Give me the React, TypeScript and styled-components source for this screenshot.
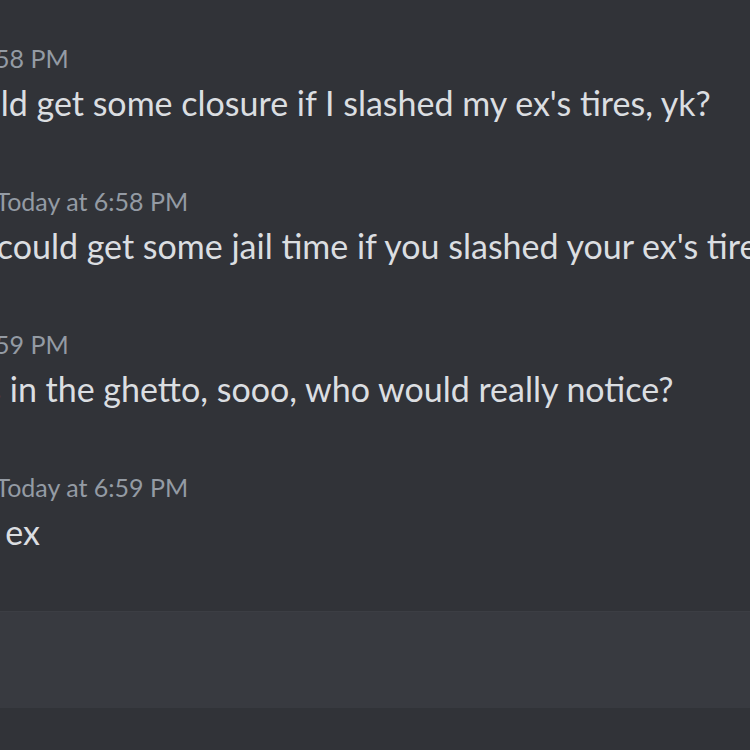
import React from 'react';
import styled, { createGlobalStyle } from 'styled-components';

// Global page reset
const GlobalStyle = createGlobalStyle`
  html, body {
    margin: 0;
    padding: 0;
    background: #313338;
  }
  body {
    font-family: Lato, "Noto Sans", sans-serif;
    overflow: hidden;
  }
`;

// Whole visible window (cropped chat view)
export const Page = styled.div`
  width: 750px;
  height: 750px;
  overflow: hidden;
  display: flex;
  flex-direction: column;
  background: #313338;
`;

// Message list, shifted left because the crop cuts off avatars and names
export const MessageList = styled.div`
  display: flex;
  flex-direction: column;
  gap: 55px;
  padding-top: 37px;
  margin-left: -213px;
  white-space: nowrap;
`;

export const MessageGroup = styled.div`
  display: flex;
  flex-direction: column;
`;

export const Header = styled.div`
  display: flex;
  align-items: baseline;
  gap: 6px;
  height: 36px;
  line-height: 36px;
  margin-bottom: 8px;
`;

export const Username = styled.span<{ $color: string }>`
  font-size: 33.6px;
  font-weight: 700;
  color: ${(p) => p.$color};
`;

export const Timestamp = styled.span`
  font-size: 25px;
  color: #949ba4;
`;

export const Content = styled.div`
  font-size: 34px;
  line-height: 44px;
  color: #dbdee1;
`;

// Chat input bar at the bottom
export const Composer = styled.div`
  margin-top: 58px;
  height: 96px;
  margin-left: -20px;
  margin-right: -20px;
  border-radius: 13px;
  background: #383a40;
  box-shadow: 0 -1px 0 #3c3e44;
`;

const messages = [
  { user: 'Tyree', color: '#f2f3f5', time: 'Today at 6:58 PM', text: "I feel like I could get some closure if I slashed my ex's tires, yk?" },
  { user: 'Marco Brown', color: '#f2f3f5', time: 'Today at 6:58 PM', text: "Yeah, but you could get some jail time if you slashed your ex's tires" },
  { user: 'Tyree', color: '#f2f3f5', time: 'Today at 6:59 PM', text: 'Yeah, she lives in the ghetto, sooo, who would really notice?' },
  { user: 'Marco Brown', color: '#f2f3f5', time: 'Today at 6:59 PM', text: "Dude I'm your ex" },
];

const App = () => {
  return (
    <Page>
      <GlobalStyle />
      <MessageList>
        {messages.map((m, i) => (
          <MessageGroup key={i}>
            <Header>
              <Username $color={m.color}>{m.user}</Username>
              <Timestamp>{m.time}</Timestamp>
            </Header>
            <Content>{m.text}</Content>
          </MessageGroup>
        ))}
      </MessageList>
      <Composer />
    </Page>
  );
};

export default App;
